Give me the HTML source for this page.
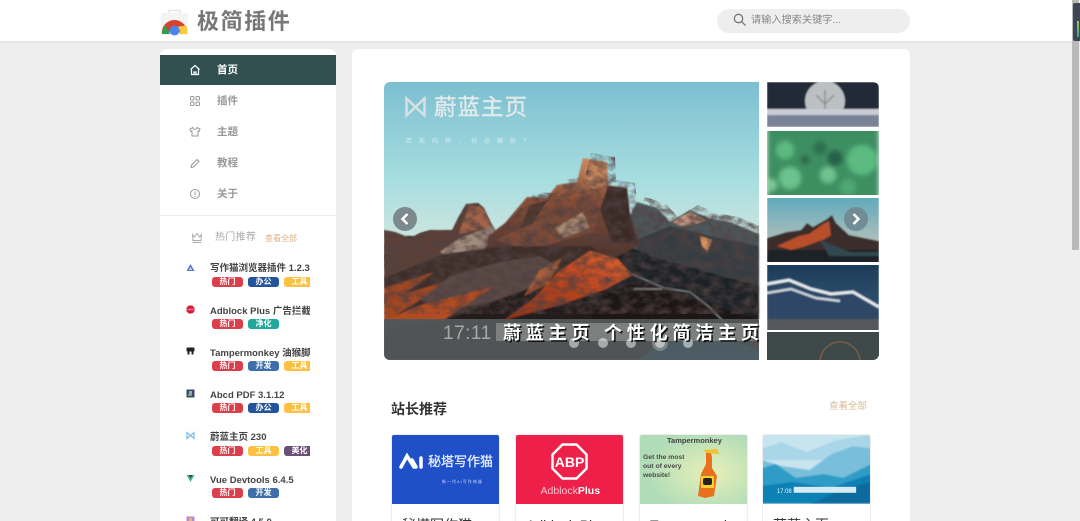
<!DOCTYPE html>
<html lang="zh"><head><meta charset="utf-8"><title>极简插件</title>
<style>
*{box-sizing:border-box;margin:0;padding:0}
html,body{width:1080px;height:521px;overflow:hidden;background:#eeeeee;font-family:"Liberation Sans","Noto Sans CJK SC",sans-serif}
.abs,.abs>*{position:absolute}
#hd{left:0;top:0;width:1080px;height:41px;background:#fff;box-shadow:0 1px 2px rgba(0,0,0,.08)}
#logo{left:197px;top:8px;font-size:22px;line-height:28px;font-weight:700;color:#777;letter-spacing:1.600px;white-space:nowrap}
#search{left:717px;top:9px;width:193px;height:24px;border-radius:12px;background:#eee}
#ph{position:absolute;left:751px;top:14px;font-size:10.200px;line-height:14px;color:#888;white-space:nowrap}
#side{left:160px;top:49px;width:176px;height:480px;background:#fff;border-radius:6px 6px 0 0;overflow:hidden}
#act{position:absolute;left:160px;top:55px;width:176px;height:30px;background:#31504f}
.nav{position:absolute;left:217px;font-size:10.500px;line-height:14px;font-weight:700;color:#999;white-space:nowrap}
.hr{position:absolute;left:160px;top:215px;width:176px;height:1px;background:#eee}
.name{position:absolute;left:210px;width:100px;overflow:hidden;font-size:9.500px;line-height:14px;font-weight:700;color:#444;white-space:nowrap}
.tagw{position:absolute;left:212px;width:98px;height:10px;overflow:hidden}
.t{position:absolute;top:0;width:31px;height:10px;border-radius:3px;color:#fff;font-size:8px;line-height:10px;text-align:center;font-weight:700;white-space:nowrap}
.r{background:#dc3f4c}.n{background:#23539b}.y{background:#fdc040}.g{background:#20a89d}.b{background:#3f6faa}.p{background:#6b4f78}
#main{left:352px;top:49px;width:558px;height:480px;background:#fff;border-radius:6px 6px 0 0}
.card{position:absolute;top:434px;width:109px;height:95px;background:#fff;border:1px solid #eee;border-radius:3px;overflow:hidden}
.card .img{position:absolute;left:-1px;top:-1px;width:109px;height:70px}
.card .tt{position:absolute;left:10px;top:81px;font-size:14px;line-height:18px;color:#333;white-space:nowrap}
#sb{left:1072px;top:0;width:7px;height:250px;background:#b9b9b9}
#ext{left:1073px;top:3px;width:7px;height:38px;background:#3e4554;border-radius:2px 0 0 2px}
</style></head><body class="abs">
<div id="hd"></div>
<svg style="left:160px;top:8px" width="29" height="28" viewBox="0 0 29 28">
<path d="M1 5h27v22H1z" fill="#f4f4f2"/><path d="M9 5V2.500h11V5" fill="none" stroke="#e6e6e4" stroke-width="1.500"/>
<path d="M2 26A12.500 12.500 0 0 1 14.500 12 12.500 12.500 0 0 1 27 26H20A5.500 5.500 0 0 0 9 26Z" fill="#d9402f"/>
<path d="M2 26A12.500 12.500 0 0 1 5.500 17L10 26H2Z" fill="#2f9e4f"/>
<path d="M20 26a5.500 5.500 0 0 0-4-7l10-1.500A12 12 0 0 1 27 26Z" fill="#fbc93d"/>
<circle cx="14.500" cy="22.500" r="5" fill="#4a86e8"/></svg>
<div id="logo">极简插件</div>
<div id="search"></div>
<svg style="left:733px;top:13px" width="14" height="14" viewBox="0 0 14 14" fill="none" stroke="#777" stroke-width="1.300"><circle cx="5.500" cy="5.500" r="4.200"/><path d="M8.600 8.600L12.500 12.500"/></svg>
<div id="ph">请输入搜索关键字...</div>

<div id="side"></div>
<div id="act"></div>
<svg style="left:189px;top:64px" width="12" height="12" viewBox="0 0 12 12" fill="none" stroke="#fff" stroke-width="1.200"><path d="M1.500 5.500L6 1.500l4.500 4M2.500 5v5.500h7V5M5 10.500V8h2v2.500"/></svg>
<div class="nav" style="top:63px;color:#fff">首页</div>
<svg style="left:189px;top:95px" width="12" height="12" viewBox="0 0 12 12" fill="none" stroke="#999" stroke-width="1"><rect x="1.500" y="1.500" width="3.500" height="3.500" rx="1"/><rect x="7" y="1.500" width="3.500" height="3.500" rx="1"/><rect x="1.500" y="7" width="3.500" height="3.500" rx="1"/><rect x="7" y="7" width="3.500" height="3.500" rx="1"/></svg>
<div class="nav" style="top:94px">插件</div>
<svg style="left:189px;top:126px" width="12" height="12" viewBox="0 0 12 12" fill="none" stroke="#999" stroke-width="1"><path d="M4 1.500L1 3l1 2.500 1-.5v5h6V5l1 .5L11 3 8 1.500a2 2 0 0 1-4 0Z"/></svg>
<div class="nav" style="top:125px">主题</div>
<svg style="left:189px;top:157px" width="12" height="12" viewBox="0 0 12 12" fill="none" stroke="#999" stroke-width="1"><path d="M2 10.500l.5-2.500L8 2.500l2 2L4.500 10Z"/></svg>
<div class="nav" style="top:156px">教程</div>
<svg style="left:189px;top:188px" width="12" height="12" viewBox="0 0 12 12" fill="none" stroke="#999" stroke-width="1"><circle cx="6" cy="6" r="4.500"/><path d="M6 3.500v3.500M6 8v1"/></svg>
<div class="nav" style="top:187px">关于</div>
<div class="hr"></div>
<svg style="left:191px;top:232px" width="12" height="12" viewBox="0 0 12 12" fill="none" stroke="#aaa" stroke-width="1"><path d="M1.500 2.500l.5 6h8l.5-6L8.500 5 6 1.500 3.500 5ZM2 10.500h8"/></svg>
<div style="left:215px;top:231px;font-size:10px;line-height:14px;color:#aaa;white-space:nowrap;letter-spacing:.3px">热门推荐</div>
<div style="left:265px;top:233px;font-size:8px;line-height:12px;color:#dcb084;white-space:nowrap">查看全部</div>

<svg style="left:186px;top:263px" width="9" height="9" viewBox="0 0 9 9"><path d="M4.500 1L8.500 8H.5Z" fill="#5a78c8"/><path d="M3 7l1.500-3L6 7Z" fill="#dde"/></svg>
<div class="name" style="top:262px">写作猫浏览器插件 1.2.3</div>
<div class="tagw" style="top:277px"><span class="t r" style="left:0">热门</span><span class="t n" style="left:36px">办公</span><span class="t y" style="left:72px">工具</span></div>
<svg style="left:186px;top:305px" width="9" height="9" viewBox="0 0 9 9"><path d="M2.700 .5h3.600l2.200 2.200v3.600L6.300 8.500H2.700L.5 6.300V2.700Z" fill="#d32028"/><rect x="1.500" y="3.700" width="6" height="1.500" fill="#f6c"/></svg>
<div class="name" style="top:305px">Adblock Plus 广告拦截</div>
<div class="tagw" style="top:319px"><span class="t r" style="left:0">热门</span><span class="t g" style="left:36px">净化</span></div>
<svg style="left:186px;top:347px" width="9" height="9" viewBox="0 0 9 9"><rect x=".5" y=".5" width="8" height="8" rx="1.500" fill="#fff"/><rect x=".5" y=".5" width="8" height="4" rx="1" fill="#222"/><rect x="1.500" y="4" width="2" height="3.500" fill="#222"/><rect x="5.500" y="4" width="2" height="3.500" fill="#222"/></svg>
<div class="name" style="top:347px">Tampermonkey 油猴脚本</div>
<div class="tagw" style="top:361px"><span class="t r" style="left:0">热门</span><span class="t b" style="left:36px">开发</span><span class="t y" style="left:72px">工具</span></div>
<svg style="left:186px;top:389px" width="9" height="9" viewBox="0 0 9 9"><rect width="8" height="8" x=".5" y=".5" fill="#3b4a6b"/><rect x="3" y="2" width="3" height="3" fill="#9ab"/><rect x="2" y="5" width="4" height="2" fill="#6a8"/></svg>
<div class="name" style="top:389px">Abcd PDF 3.1.12</div>
<div class="tagw" style="top:403px"><span class="t r" style="left:0">热门</span><span class="t n" style="left:36px">办公</span><span class="t y" style="left:72px">工具</span></div>
<svg style="left:186px;top:431px" width="9" height="9" viewBox="0 0 9 9" fill="none" stroke="#79bdf0" stroke-width="1.200"><path d="M1 1.500v6L8 1.500v6L1 1.500Z"/></svg>
<div class="name" style="top:431px">蔚蓝主页 230</div>
<div class="tagw" style="top:446px"><span class="t r" style="left:0">热门</span><span class="t y" style="left:36px">工具</span><span class="t p" style="left:72px">美化</span></div>
<svg style="left:186px;top:474px" width="9" height="9" viewBox="0 0 9 9"><path d="M.5 1h8L4.500 8Z" fill="#3fb984"/><path d="M2.500 1h4L4.500 4.500Z" fill="#35495e"/></svg>
<div class="name" style="top:474px">Vue Devtools 6.4.5</div>
<div class="tagw" style="top:488px"><span class="t r" style="left:0">热门</span><span class="t b" style="left:36px">开发</span></div>
<svg style="left:186px;top:516px" width="9" height="9" viewBox="0 0 9 9"><rect width="8" height="8" x=".5" y=".5" fill="#b58ad0"/><rect x="3" y="2" width="3" height="3" fill="#e8c04a"/></svg>
<div class="name" style="top:516px">可可翻译 4.5.0</div>

<div id="main"></div>

<svg style="left:384px;top:82px" width="495" height="278" viewBox="384 82 495 278">
<defs>
<filter id="bl" x="-5%" y="-5%" width="110%" height="110%"><feGaussianBlur stdDeviation=".8"/></filter>
<filter id="bl2" x="-5%" y="-5%" width="110%" height="110%"><feGaussianBlur stdDeviation="2.500"/></filter>
<filter id="noise" x="0" y="0" width="100%" height="100%"><feTurbulence type="fractalNoise" baseFrequency=".09 .13" numOctaves="3" seed="7"/><feColorMatrix values="0 0 0 0 0.08  0 0 0 0 0.05  0 0 0 0 0.05  1.800 0 0 0 -.62"/></filter>
<linearGradient id="sky" x1="0" y1="0" x2="0" y2="1"><stop offset="0" stop-color="#7cbfd0"/><stop offset=".6" stop-color="#a6dde0"/><stop offset="1" stop-color="#cfe6df"/></linearGradient>
<linearGradient id="rock" x1="0" y1="0" x2="0" y2="1"><stop offset="0" stop-color="#c88b62"/><stop offset=".35" stop-color="#8a5038"/><stop offset="1" stop-color="#3e2a26"/></linearGradient>
<linearGradient id="org" x1="0" y1="1" x2="1" y2="0"><stop offset="0" stop-color="#8a3418"/><stop offset=".6" stop-color="#c14820"/><stop offset="1" stop-color="#dd6530"/></linearGradient>
<linearGradient id="sky3" x1="0" y1="0" x2="0" y2="1"><stop offset="0" stop-color="#5aa8bd"/><stop offset="1" stop-color="#d8c9b8"/></linearGradient>
<linearGradient id="s4" x1="0" y1="0" x2="0" y2="1"><stop offset="0" stop-color="#1c3a56"/><stop offset="1" stop-color="#3a5f80"/></linearGradient>
<clipPath id="rc"><rect x="384" y="82" width="495" height="278" rx="6"/></clipPath>
<clipPath id="land"><path d="M384 230l11 2 15 6 10-5 10-3h22l6-12 8-14 12-1 6 5 7 15 5 8 17-13 22-26 20 1 10-13 20-3 6-24 24 4 1 23 19 3 3 27 7-13 20 6 13 14 20-12 18 8 22 4 29 12v85H384Z"/></clipPath>
</defs>
<g clip-path="url(#rc)">
<rect x="384" y="82" width="495" height="278" fill="#fff"/>
<rect x="384" y="82" width="375" height="160" fill="url(#sky)"/>
<g filter="url(#bl)">
<rect x="384" y="236" width="375" height="124" fill="#241d1c"/>
<!-- far right ridge -->
<path d="M630 215l7-13 20 6 13 14 20-12 18 8 22 4 29 12v60H630Z" fill="#4e565a"/>
<path d="M672 222l18-10 16 8-10 4-14 2Z" fill="#c79a80"/>
<path d="M636 240l34-14 40 10 49 10v50H640Z" fill="#343c42"/>
<path d="M700 236l12 4-5 12-5-6Z" fill="#d8935c"/>
<path d="M600 235l60 24 99 27v30H610Z" fill="#1e2428"/>
<!-- left ridge -->
<path d="M384 230l11 2 15 6 10-5 10-3h22l6-12 8-14 12-1 6 5 7 15 5 8-10 20-60 20-42 16Z" fill="#5c4138"/>
<path d="M469 206h11l6 8 6 14-16 2-18 5Z" fill="#a4644a"/>
<path d="M440 252l20-14 32-12 6 8-18 18-24 8Z" fill="#a08a7c"/>
<!-- main massif -->
<path d="M488 236l17-13 22-26 20 1 10-13 20-3 6-24 24 4 1 23 19 3 3 27 10 30-30 15-55 8-70 5Z" fill="url(#rock)"/>
<path d="M585 160l21 2 1 23-14 4-8-8Z" fill="#c48458"/>
<path d="M608 186l19 2 3 26 8 30-26-2-12-32Z" fill="#3a2c28"/>
<path d="M530 205l18-5-16 24-14 10Z" fill="#4e342c"/>
<path d="M495 240l50-22 45-24 10 12-6 26-36 10-30 8Z" fill="#7c4c38"/>
<path d="M555 228l28-16 6 16-26 10Z" fill="#a98a72"/>
<!-- mid rocks -->
<path d="M384 278l60-24 60-8 88 0 8 10-50 22-50 22-50 18-66 12Z" fill="#3e2f2c"/>
<path d="M420 300l30-24 50-14 40-6 20 12-30 20-40 14-40 8Z" fill="#5a4a44"/>
<path d="M384 288l50-16-30 22 40-12-30 22-30 18Z" fill="#a24620"/>
<path d="M384 320l40-16 40-10 30-8-30 20-20 14Z" fill="#b04b22"/>
<!-- orange ridge -->
<path d="M590 251l28 8 14 16-26 14-40 14-36 10-26 7 30-22 24-26Z" fill="url(#org)"/>
<path d="M540 270l22-12-14 26-24 12Z" fill="#e0713a" opacity=".6"/>
<path d="M610 290l30-8 70 22 49 16H590Z" fill="#1b1717"/>
<path d="M632 274l32 14 26 4 18 14 18 18" fill="none" stroke="#8f9898" stroke-width="1"/>
<path d="M634 289h28" stroke="#a8b0b0" stroke-width="1"/>
</g>
<g clip-path="url(#land)"><rect x="384" y="150" width="375" height="170" filter="url(#noise)"/></g>
<rect x="384" y="319" width="375" height="41" fill="#55595a" opacity=".92"/>
<path d="M650 350l55-20 54 20v10H640Z" fill="#4a6068" opacity=".7"/>
<rect x="496" y="323" width="263" height="18" fill="#8b8d8c" opacity=".75"/>

<!-- thumb 1 -->
<svg x="767" y="82" width="112" height="45" viewBox="767 82 112 45"><g filter="url(#bl)">
<rect x="767" y="82" width="112" height="45" fill="#232c38"/>
<circle cx="825" cy="101" r="20" fill="#bcc0c2"/><path d="M825 90v20M816 95l9 9 9-9" stroke="#8a8f94" stroke-width="1.500" fill="none"/>
<rect x="767" y="109" width="112" height="18" fill="#7a8298"/><rect x="767" y="109" width="112" height="6" fill="#c8ccd4"/>
</g></svg>
<!-- thumb 2 -->
<svg x="767" y="131" width="112" height="64" viewBox="767 131 112 64"><g filter="url(#bl2)">
<rect x="767" y="125" width="112" height="76" fill="#3d8f62"/>
<circle cx="785" cy="150" r="9" fill="#5cb97f"/><circle cx="790" cy="178" r="11" fill="#6cc28c"/><circle cx="862" cy="160" r="15" fill="#5cbb80"/><circle cx="828" cy="175" r="8" fill="#6fc38f"/><circle cx="820" cy="148" r="7" fill="#2f6f50"/><circle cx="835" cy="158" r="8" fill="#26604a"/><circle cx="848" cy="187" r="8" fill="#4fa873"/><circle cx="771" cy="185" r="6" fill="#7bc996"/><circle cx="805" cy="160" r="5" fill="#2d6a4e"/></g></svg>
<!-- thumb 3 -->
<svg x="767" y="198" width="112" height="64" viewBox="767 198 112 64"><g filter="url(#bl)">
<rect x="767" y="194" width="112" height="70" fill="url(#sky3)"/>
<path d="M767 238l20-6 14-2 6-7 6 4 14-8 5-4 4 8 13 12 30 6 0 30H767Z" fill="#3a2f2c"/>
<path d="M777 246l22-10 10-2 14-10 6-3 2 14-6 4-22 8-12 3Z" fill="#b8502a"/>
<path d="M767 250h112v14H767Z" fill="#1c2226"/>
<path d="M820 240l30 12 29 0v4h-50Z" fill="#324650"/>
</g></svg>
<!-- thumb 4 -->
<svg x="767" y="265" width="112" height="65" viewBox="767 265 112 65"><g filter="url(#bl)">
<rect x="767" y="262" width="112" height="70" fill="url(#s4)"/>
<path d="M767 284l22-4 22 9 20 5 22-2 26 15v27H767Z" fill="#2e4766"/>
<path d="M767 284l22-4 22 9 20 5 22-2 26 15" fill="none" stroke="#e4eaee" stroke-width="3"/>
<path d="M767 293l24-4 25 9 24 3" fill="none" stroke="#c8d2da" stroke-width="2.500"/>
<rect x="767" y="319" width="112" height="13" fill="#55585c"/>
</g></svg>
<!-- thumb 5 -->
<rect x="767" y="332" width="112" height="28" fill="#3e4a4a"/>
<circle cx="840" cy="362" r="20" fill="none" stroke="#7a5a48" stroke-width="1.500"/>
<rect x="759" y="319" width="8" height="41" fill="#fff"/>
<!-- dots -->
<g fill="#fff" fill-opacity=".5"><circle cx="574" cy="343" r="5"/><circle cx="603" cy="343" r="5"/><circle cx="631" cy="343" r="5"/><circle cx="660" cy="343" r="5"/><circle cx="660" cy="343" r="8" fill-opacity=".25"/><circle cx="688" cy="343" r="5"/></g>
<!-- hero logo -->
<path d="M406.500 98.500v17L424.500 98.500v17L406.500 98.500Z" fill="none" stroke="#d8e0e2" stroke-width="2.500"/>
<text x="434" y="115" font-size="22.500" stroke="#e0eaea" stroke-width=".4" fill="#e0eaea" font-family="'Liberation Sans','Noto Sans CJK SC',sans-serif" letter-spacing="1">蔚蓝主页</text>
<text x="406" y="143" font-size="6" fill="#d4ecec" font-family="'Liberation Sans','Noto Sans CJK SC',sans-serif" letter-spacing="7">若能纯粹，何必臃肿？</text>
<text x="443" y="339" font-size="19" fill="#a8a8a8" font-family="'Liberation Sans',sans-serif" letter-spacing=".5">17:11</text>
<text x="503" y="339" font-size="18" font-weight="700" fill="#000" opacity=".85" font-family="'Liberation Sans','Noto Sans CJK SC',sans-serif" letter-spacing="4.800" transform="translate(1.500 1.500)">蔚蓝主页 个性化简洁主页</text>
<text x="503" y="339" font-size="18" font-weight="700" fill="#fff" font-family="'Liberation Sans','Noto Sans CJK SC',sans-serif" letter-spacing="4.800">蔚蓝主页 个性化简洁主页</text>
<!-- arrows -->
<circle cx="405" cy="219" r="12" fill="#78848a" opacity=".95"/><path d="M407.500 214l-5 5 5 5" fill="none" stroke="#fff" stroke-width="2.500"/>
<circle cx="856" cy="219" r="12" fill="#6f8a92" opacity=".95"/><path d="M853.500 214l5 5-5 5" fill="none" stroke="#fff" stroke-width="2.500"/>
</g></svg>

<div style="left:391px;top:400px;font-size:14px;line-height:19px;font-weight:700;color:#333;white-space:nowrap">站长推荐</div>
<div style="left:829px;top:400px;font-size:9.500px;line-height:14px;color:#dcb894;white-space:nowrap">查看全部</div>

<div class="card" style="left:391px"><svg class="img" viewBox="0 0 109 70"><rect width="109" height="70" fill="#1f50c8"/><path d="M10 33l6-11 7 11M25 33l-4-7M30 33V24" fill="none" stroke="#fff" stroke-width="3.500" stroke-linecap="round"/><text x="37" y="32" font-size="13" fill="#e8eefc" stroke="#e8eefc" stroke-width=".3" font-family="'Liberation Sans','Noto Sans CJK SC',sans-serif">秘塔写作猫</text><text x="51" y="49" font-size="4" fill="#cdd9f5" font-family="'Liberation Sans','Noto Sans CJK SC',sans-serif" letter-spacing="1">新一代AI写作神器</text></svg><div class="tt">秘塔写作猫</div></div>
<div class="card" style="left:515px"><svg class="img" viewBox="0 0 108 70"><rect width="109" height="70" fill="#ee1f48"/><path d="M47 10.500h14l10 10v14l-10 10H47l-10-10v-14Z" fill="none" stroke="#fff" stroke-width="2.500"/><text x="54" y="33" text-anchor="middle" font-size="14" font-weight="700" fill="#fff" font-family="'Liberation Sans',sans-serif">ABP</text><text x="25" y="60" font-size="10.500" fill="#f8c5cf" font-family="'Liberation Sans',sans-serif">Adblock<tspan font-weight="700" fill="#fff">Plus</tspan></text></svg><div class="tt">Adblock Plus</div></div>
<div class="card" style="left:639px"><svg class="img" viewBox="0 0 109 70"><defs><radialGradient id="gg" cx=".65" cy=".55" r=".6"><stop offset="0" stop-color="#e8f0b8"/><stop offset="1" stop-color="#b0dcb8"/></radialGradient></defs><rect width="109" height="70" fill="url(#gg)"/><text x="28" y="9" font-size="7.500" font-weight="700" fill="#444" font-family="'Liberation Sans',sans-serif">Tampermonkey</text><g font-size="6.800" font-weight="700" fill="#4a4a4a" font-family="'Liberation Sans',sans-serif"><text x="4" y="25">Get the most</text><text x="4" y="34">out of every</text><text x="4" y="43">website!</text></g><path d="M67 18l5 0 1 6 0 10 5 8-3 20-9 2-7-2 3-22 5-10Z" fill="#e8701e"/><rect x="62" y="42" width="13" height="12" fill="#f3d22e"/><rect x="64" y="44" width="9" height="7" rx="2" fill="#222"/><path d="M64 16l14-1 2 5-12-1Z" fill="#f2c230"/></svg><div class="tt">Tampermonkey</div></div>
<div class="card" style="left:762px"><svg class="img" viewBox="0 0 110 70"><g filter="url(#bl)"><rect width="110" height="70" fill="#c7e4ef"/><path d="M0 14l20-6 25 10 30-12 35-6v16l-30 10L0 26Z" fill="#a9d6e8"/><path d="M0 26l20 6 28 4 22-16 22-8 18 2v50H0Z" fill="#79bfdb"/><path d="M0 34l14-4 20 14 28-4 20 4 28-14v40H0Z" fill="#2f9cc6"/><path d="M0 52l30-4 40 6 40-14v30H0Z" fill="#1180b5"/><path d="M50 70l30-14 30-8v22Z" fill="#0d6a9e"/></g><rect x="32" y="53" width="63" height="6" fill="#d6ecf4"/><text x="15" y="59" font-size="6" fill="#e8f4f8" font-family="'Liberation Sans',sans-serif">17:08</text></svg><div class="tt">蔚蓝主页</div></div>

<div id="sb"></div>
<div id="ext"></div>
<div style="left:1077px;top:21px;width:2px;height:16px;background:linear-gradient(#a9c44c,#2aa98f)"></div>
</body></html>
